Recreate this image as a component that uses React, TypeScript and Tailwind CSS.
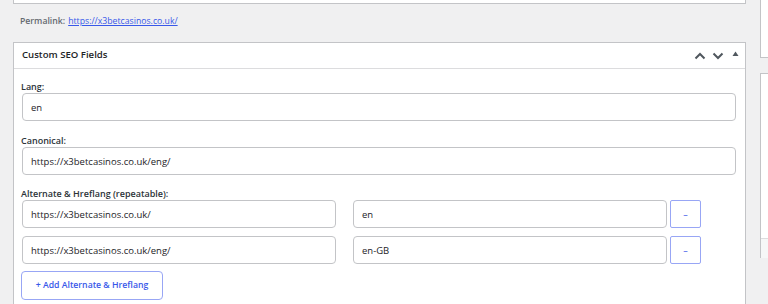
import React from "react";

const inputCls =
  "mx-px h-[28px] rounded-[4px] border border-[#c3c4c7] bg-white px-2 text-[9.5px] leading-[26px] text-[#1d2327] outline-none";

const labelCls = "h-[12px] text-[9px] leading-[12px] font-semibold text-[#2c3338]";

function Field({ label, value, top }: { label: string; value: string; top: string }) {
  return (
    <div className={top}>
      <div className={labelCls}>{label}</div>
      <input readOnly value={value} className={`${inputCls} block w-[714px]`} />
    </div>
  );
}

function HrefRow({ url, lang, top }: { url: string; lang: string; top: string }) {
  return (
    <div className={`flex items-center ${top}`}>
      <input readOnly value={url} className={`${inputCls} w-[314px]`} />
      <input readOnly value={lang} className={`${inputCls} ml-[16px] w-[314px]`} />
      <button className="ml-[2px] h-[28px] w-[31px] rounded-[2px] border border-[#98a6f5] bg-white text-[9px] leading-none text-[#3858e9]">
        –
      </button>
    </div>
  );
}

export default function App() {
  return (
    <div
      className="flex h-[304px] w-[768px] overflow-hidden bg-[#f0f0f1]"
      style={{ fontFamily: '"Open Sans", "Noto Sans", sans-serif' }}
    >
      <div className="ml-[13px] w-[733px] shrink-0">
        <div className="h-[4px] border-x border-b border-[#c3c4c7] bg-white" />
        <div className="flex h-[38px] items-center pl-[7px] pb-[2px] text-[8.7px]">
          <span className="font-semibold text-[#646970]">Permalink:</span>
          <a href="#" className="ml-[3px] text-[#3858e9] underline">
            https://x3betcasinos.co.uk/
          </a>
        </div>
        <div className="h-[300px] border border-[#c3c4c7] bg-white">
          <div className="flex h-[26px] items-center justify-between border-b border-[#dcdcde] pl-[8px] pr-[6px]">
            <h2 className="text-[9.6px] font-semibold text-[#1d2327]">Custom SEO Fields</h2>
            <div className="flex items-center">
              <svg width="12" height="8" viewBox="0 0 12 8" className="mr-[6px]">
                <path d="M1.5 6.5 6 2l4.5 4.5" fill="none" stroke="#50575e" strokeWidth="2" />
              </svg>
              <svg width="12" height="8" viewBox="0 0 12 8" className="mr-[8px]">
                <path d="M1.5 1.5 6 6l4.5-4.5" fill="none" stroke="#50575e" strokeWidth="2" />
              </svg>
              <svg width="7" height="6" viewBox="0 0 7 6" className="mb-[3px]">
                <path d="M3.5 0.5 6.5 5h-6z" fill="#50575e" />
              </svg>
            </div>
          </div>
          <div className="px-[7px] pt-[12px]">
            <Field label="Lang:" value="en" top="" />
            <Field label="Canonical:" value="https://x3betcasinos.co.uk/eng/" top="mt-[14px]" />
            <div className={`mt-[13px] ${labelCls}`}>Alternate &amp; Hreflang (repeatable):</div>
            <HrefRow url="https://x3betcasinos.co.uk/" lang="en" top="" />
            <HrefRow url="https://x3betcasinos.co.uk/eng/" lang="en-GB" top="mt-[8px]" />
            <button className="mt-[7px] h-[29px] w-[142px] rounded-[4px] border border-[#98a6f5] bg-white text-[8.7px] font-semibold text-[#3858e9]">
              + Add Alternate &amp; Hreflang
            </button>
          </div>
        </div>
      </div>
      <div className="ml-[14px] w-[200px] shrink-0">
        <div className="h-[58px] border border-t-0 border-[#c3c4c7] bg-white" />
        <div className="mt-[15px] h-[185px] border border-[#c3c4c7] bg-white">
          <div className="h-[164px]" />
          <div className="h-[20px] border-t border-[#dcdcde] bg-[#f6f7f7]" />
        </div>
      </div>
    </div>
  );
}
